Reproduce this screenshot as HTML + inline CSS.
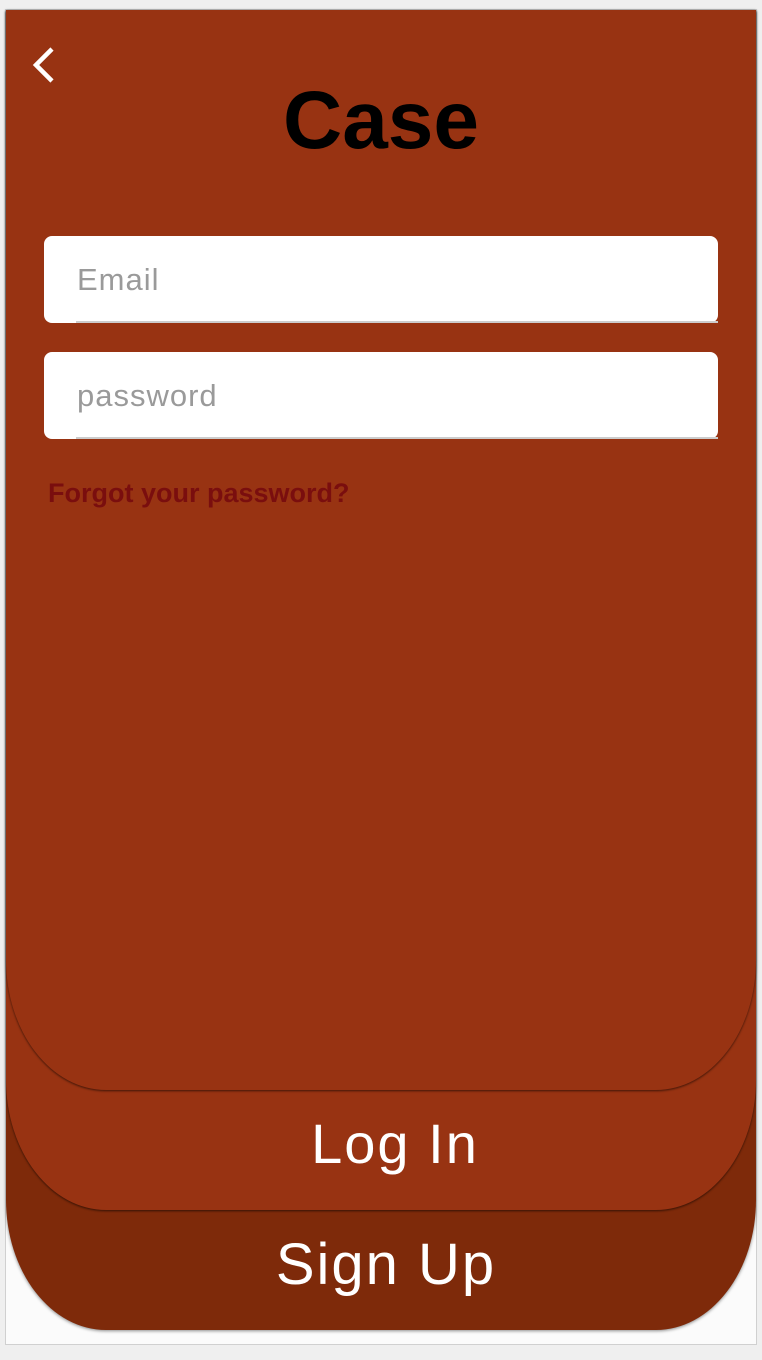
<!DOCTYPE html>
<html><head><style>
html,body{margin:0;padding:0;width:762px;height:1360px;background:#efefef;overflow:hidden;font-family:"Liberation Sans",sans-serif}
.frame{position:absolute;left:5px;top:9px;width:750px;height:1334px;border:1px solid #d0d0d0;background:#fbfbfb}
.layer{position:absolute;left:6px;width:750px;top:10px;border-radius:0 0 100px 100px/0 0 130px 130px}
.l3{height:1320px;background:#7e2a0a;box-shadow:0 1px 3px rgba(0,0,0,.45)}
.l2{height:1200px;background:#983312;box-shadow:0 1px 2px rgba(0,0,0,.6)}
.l1{height:1080px;background:#983312;box-shadow:0 1px 2px rgba(0,0,0,.6)}
.field{position:absolute;left:44px;width:674px;height:87px;background:#fff;border-radius:8px}
.field span{position:absolute;left:33px;top:26px;font-size:31px;color:#9a9a9a;letter-spacing:1px}
.field i{position:absolute;left:32px;right:0;bottom:0;height:2px;background:#ccc}
.t{position:absolute;left:0;width:762px;text-align:center}
</style></head><body>
<div class="frame"></div>
<div class="layer l3"></div>
<div class="layer l2"></div>
<div class="layer l1"></div>
<svg style="position:absolute;left:30px;top:45px" width="30" height="42"><path d="M22 4 L6 20 L22 36" stroke="#fff" stroke-width="4.5" fill="none"/></svg>
<div class="t" style="top:74px;font-size:82px;font-weight:bold;color:#000;letter-spacing:0px">Case</div>
<div class="field" style="top:236px"><span>Email</span><i></i></div>
<div class="field" style="top:352px"><span>password</span><i></i></div>
<div style="position:absolute;left:48px;top:478px;font-size:27px;font-weight:bold;color:#7a0e0e">Forgot your password?</div>
<div class="t" style="left:14px;top:1111px;font-size:56px;color:#fff;letter-spacing:2px">Log In</div>
<div class="t" style="left:5px;top:1231px;font-size:58px;color:#fff;letter-spacing:2px">Sign Up</div>
</body></html>
